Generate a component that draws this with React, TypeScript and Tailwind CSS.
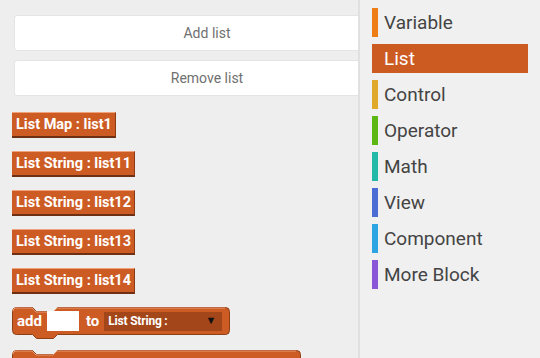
import React from 'react'

const lists = ['List Map : list1', 'List String : list11', 'List String : list12', 'List String : list13', 'List String : list14']

const categories = [
  { label: 'Variable', color: 'bg-[#ee7d16]' },
  { label: 'List', color: 'bg-[#cc5b22]' },
  { label: 'Control', color: 'bg-[#e1a92a]' },
  { label: 'Operator', color: 'bg-[#5cb712]' },
  { label: 'Math', color: 'bg-[#23b9a9]' },
  { label: 'View', color: 'bg-[#4a6cd4]' },
  { label: 'Component', color: 'bg-[#2ca5e2]' },
  { label: 'More Block', color: 'bg-[#8a55d7]' },
]

// block outline with the puzzle notch on top and tab below
function blockPath(w: number, h: number) {
  return `M0,4 Q0,0 4,0 H20 L24,4 H41 L45,0 H${w - 4} Q${w},0 ${w},4 V${h - 4} Q${w},${h} ${w - 4},${h} H45 L41,${h + 4} H24 L20,${h} H4 Q0,${h} 0,${h - 4} Z`
}

function StackBlock({ width, children }: { width: number; children?: React.ReactNode }) {
  return (
    <div className="relative h-[32px]" style={{ width }}>
      <svg className="absolute left-0 top-0" width={width} height={32} viewBox={`0 0 ${width} 32`}>
        <path d={blockPath(width - 1, 27)} transform="translate(0.5,0.5)" fill="#cd5b24" stroke="#8f3f16" strokeWidth="1" />
        <path d={`M1,4 Q1,1 4,1 H20 L24,5 H41 L45,1 H${width - 5}`} fill="none" stroke="#ec9a72" strokeWidth="1" />
      </svg>
      <div className="relative flex h-[28px] items-center pl-[5px]">{children}</div>
    </div>
  )
}

export default function App() {
  return (
    <div
      className="flex h-[358px] w-[540px] overflow-hidden bg-[#eeeeee]"
      style={{ fontFamily: 'Roboto, "Liberation Sans", sans-serif' }}
    >
      {/* blocks palette */}
      <div className="w-[358px] shrink-0 overflow-hidden pl-[14px] pt-[15px]">
        <div className="flex w-[386px] flex-col gap-[9px]">
          <button className="h-[36px] w-full rounded-[3px] border border-[#e4e4e4] bg-white text-[14px] text-[#707070]">
            Add list
          </button>
          <button className="h-[36px] w-full rounded-[3px] border border-[#e4e4e4] bg-white text-[14px] text-[#707070]">
            Remove list
          </button>
        </div>

        <div className="-ml-[2px] mt-[16px] flex flex-col items-start gap-[13px]">
          {lists.map((name) => (
            <div
              key={name}
              className="flex h-[26px] items-center border-b-2 border-r border-t border-b-[#6e3014] border-r-[#8a3b16] border-t-[#f0a27c] bg-[#cd5b24] pl-[4px] pr-[3px] text-[14.5px] font-bold text-white"
            >
              {name}
            </div>
          ))}

          <StackBlock width={218}>
            <span className="text-[15px] font-bold text-white">add</span>
            <span className="ml-[5px] h-[20px] w-[32px] bg-white" />
            <span className="ml-[7px] text-[15px] font-bold text-white">to</span>
            <span className="ml-[5px] flex h-[19px] w-[118px] items-center justify-between bg-[#a3461a] pl-[4px] pr-[6px] text-[12px] font-bold tracking-[-0.2px] text-white">
              List String :
              <span className="text-[11px] text-[#111111]">▼</span>
            </span>
          </StackBlock>

          <div className="-mt-[2px]">
            <StackBlock width={289} />
          </div>
        </div>
      </div>

      {/* category list */}
      <div className="flex-1 border-l-2 border-[#e0e0e0] bg-[#f0f0f0] pl-[12px] pr-[12px] pt-[8px]">
        <div className="flex flex-col gap-[7px]">
          {categories.map((c) => {
            const active = c.label === 'List'
            return (
              <div
                key={c.label}
                className={`flex h-[29px] items-center ${active ? 'bg-[#cc5b22] text-white' : 'text-[#444444]'}`}
              >
                <span className={`h-full w-[6px] ${c.color}`} />
                <span className="ml-[6px] text-[19px] leading-none">{c.label}</span>
              </div>
            )
          })}
        </div>
      </div>
    </div>
  )
}
